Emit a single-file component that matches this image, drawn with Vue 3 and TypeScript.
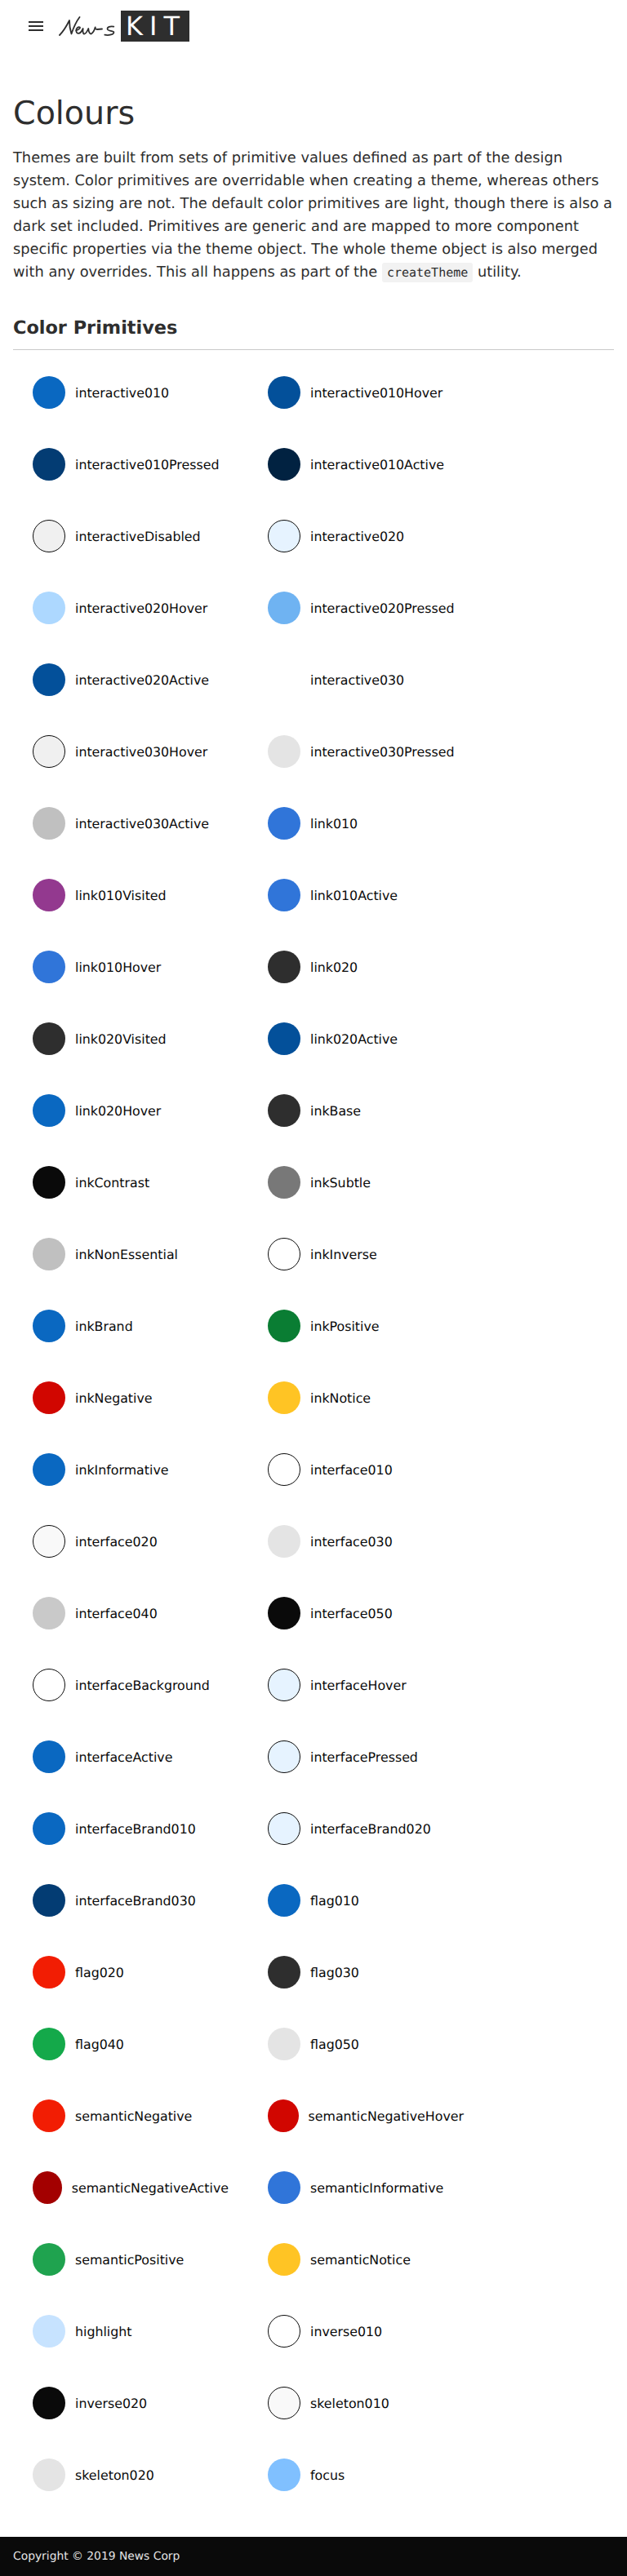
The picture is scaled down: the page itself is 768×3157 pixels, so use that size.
<template>
  <div class="page">
    <header class="top-bar">
      <button class="menu-btn" aria-label="menu">
        <svg width="18" height="12" viewBox="0 0 18 12"><path d="M0 0h18v2H0zM0 5h18v2H0zM0 10h18v2H0z" fill="#2e2e2e" /></svg>
      </button>
      <div class="logo">
        <svg class="logo-news" width="70" height="26" viewBox="0 0 70 26" fill="none" stroke="#2e2e2e" stroke-width="1.8" stroke-linecap="round" stroke-linejoin="round">
          <path d="M1 24 C5 20 10 12 13 6 C13 12 14 18 15.5 22.5 C18 15 21 8 25.5 2" />
          <path d="M21 18.5 C23 18 26.5 16 26 14.5 C24 13.5 21 15.5 21.3 18.5 C21.6 23 26 24 29.7 16 C29 20 30 23 31.5 22.5 C33 22 35 19 36.3 16 C36.5 20 38 23 39.7 22.5 C42 21 44 17 44.7 14.3 C44.5 16 45 17 47 17 L53 16.5" />
          <path d="M67.3 13.7 C63 13 59 14 59.7 17 C60.5 19 66 18.5 67.3 20 C68.5 23 61 25 56.3 23.7" />
        </svg>
        <div class="logo-kit">KIT</div>
      </div>
    </header>

    <main class="content">
      <h1 class="title">Colours</h1>
      <p class="intro">
        Themes are built from sets of primitive values defined as part of the design system. Color primitives are overridable when creating a theme, whereas others such as sizing are not. The default color primitives are light, though there is also a dark set included. Primitives are generic and are mapped to more component specific properties via the theme object. The whole theme object is also merged with any overrides. This all happens as part of the
        <code class="inline-code">createTheme</code> utility.
      </p>
      <h2 class="section-title">Color Primitives</h2>
      <div class="swatches">
        <div v-for="c in colors" :key="c.name" class="swatch">
          <span class="dot" :class="{ outlined: c.outlined }" :style="{ background: c.hex }"></span>
          <span class="name">{{ c.name }}</span>
        </div>
      </div>
    </main>

    <footer class="footer">Copyright © 2019 News Corp</footer>
  </div>
</template>

<script setup lang="ts">
interface Swatch {
  name: string
  hex: string
  outlined?: boolean
}

const colors: Swatch[] = [
  { name: 'interactive010', hex: '#0a68c1' },
  { name: 'interactive010Hover', hex: '#03509a' },
  { name: 'interactive010Pressed', hex: '#033c73' },
  { name: 'interactive010Active', hex: '#012241' },
  { name: 'interactiveDisabled', hex: '#f0f0f0', outlined: true },
  { name: 'interactive020', hex: '#e6f3ff', outlined: true },
  { name: 'interactive020Hover', hex: '#add8ff' },
  { name: 'interactive020Pressed', hex: '#6fb3f2' },
  { name: 'interactive020Active', hex: '#03509a' },
  { name: 'interactive030', hex: '#ffffff' },
  { name: 'interactive030Hover', hex: '#f0f0f0', outlined: true },
  { name: 'interactive030Pressed', hex: '#e4e4e4' },
  { name: 'interactive030Active', hex: '#c0c0c0' },
  { name: 'link010', hex: '#3075d9' },
  { name: 'link010Visited', hex: '#93398f' },
  { name: 'link010Active', hex: '#3075d9' },
  { name: 'link010Hover', hex: '#3075d9' },
  { name: 'link020', hex: '#2e2e2e' },
  { name: 'link020Visited', hex: '#2e2e2e' },
  { name: 'link020Active', hex: '#03509a' },
  { name: 'link020Hover', hex: '#0a68c1' },
  { name: 'inkBase', hex: '#2e2e2e' },
  { name: 'inkContrast', hex: '#0a0a0a' },
  { name: 'inkSubtle', hex: '#787878' },
  { name: 'inkNonEssential', hex: '#c0c0c0' },
  { name: 'inkInverse', hex: '#ffffff', outlined: true },
  { name: 'inkBrand', hex: '#0a68c1' },
  { name: 'inkPositive', hex: '#0a7d33' },
  { name: 'inkNegative', hex: '#d10600' },
  { name: 'inkNotice', hex: '#ffc424' },
  { name: 'inkInformative', hex: '#0a68c1' },
  { name: 'interface010', hex: '#ffffff', outlined: true },
  { name: 'interface020', hex: '#f9f9f9', outlined: true },
  { name: 'interface030', hex: '#e4e4e4' },
  { name: 'interface040', hex: '#c9c9c9' },
  { name: 'interface050', hex: '#0a0a0a' },
  { name: 'interfaceBackground', hex: '#ffffff', outlined: true },
  { name: 'interfaceHover', hex: '#e6f3ff', outlined: true },
  { name: 'interfaceActive', hex: '#0a68c1' },
  { name: 'interfacePressed', hex: '#e6f3ff', outlined: true },
  { name: 'interfaceBrand010', hex: '#0a68c1' },
  { name: 'interfaceBrand020', hex: '#e6f3ff', outlined: true },
  { name: 'interfaceBrand030', hex: '#033c73' },
  { name: 'flag010', hex: '#0a68c1' },
  { name: 'flag020', hex: '#f21d03' },
  { name: 'flag030', hex: '#2e2e2e' },
  { name: 'flag040', hex: '#14a94a' },
  { name: 'flag050', hex: '#e4e4e4' },
  { name: 'semanticNegative', hex: '#f21d03' },
  { name: 'semanticNegativeHover', hex: '#d10600' },
  { name: 'semanticNegativeActive', hex: '#a30000' },
  { name: 'semanticInformative', hex: '#3075d9' },
  { name: 'semanticPositive', hex: '#1fa34f' },
  { name: 'semanticNotice', hex: '#ffc424' },
  { name: 'highlight', hex: '#c7e3ff' },
  { name: 'inverse010', hex: '#ffffff', outlined: true },
  { name: 'inverse020', hex: '#0a0a0a' },
  { name: 'skeleton010', hex: '#f9f9f9', outlined: true },
  { name: 'skeleton020', hex: '#e4e4e4' },
  { name: 'focus', hex: '#80c0ff' }
]
</script>

<style>
html,
body {
  margin: 0;
  background: #fff;
}
</style>

<style scoped>
.page {
  font-family: 'DejaVu Sans', sans-serif;
  color: #2e2e2e;
  width: 768px;
  text-rendering: geometricPrecision;
}

.top-bar {
  display: flex;
  align-items: center;
  height: 64px;
  box-sizing: border-box;
  padding: 0 0 0 35px;
}

.menu-btn {
  border: 0;
  background: none;
  padding: 0;
  display: flex;
  width: 18px;
  height: 12px;
  margin-right: 19px;
}

.logo {
  display: flex;
  align-items: center;
}

.logo-news {
  margin-right: 6px;
}

.logo-kit {
  width: 84px;
  height: 38px;
  background: #2e2e2e;
  color: #fff;
  font-size: 32px;
  line-height: 38px;
  letter-spacing: 8px;
  box-sizing: border-box;
  padding-left: 6px;
  overflow: hidden;
}

.content {
  padding: 0 16px;
}

.title {
  margin: 47px 0 0;
  font-size: 39.6px;
  line-height: 56px;
  font-weight: 400;
}

.intro {
  margin: 13px 0 0;
  font-size: 17.8px;
  line-height: 28px;
}

.inline-code {
  font-family: 'DejaVu Sans Mono', monospace;
  font-size: 15px;
  background: #f2f2f2;
  border-radius: 3px;
  padding: 3px 6px;
}

.section-title {
  margin: 40px 0 0;
  padding-bottom: 12px;
  border-bottom: 1px solid #c9c9c9;
  font-size: 22.4px;
  line-height: 28px;
  font-weight: 700;
}

.swatches {
  display: grid;
  grid-template-columns: 240px 240px;
  column-gap: 48px;
  row-gap: 48px;
  padding: 32px 0 0 24px;
}

.swatch {
  display: flex;
  align-items: center;
  height: 40px;
  min-width: 0;
}

.dot {
  flex: 0 1 40px;
  min-width: 0;
  height: 40px;
  border-radius: 50%;
  box-sizing: border-box;
}

.dot.outlined {
  border: 1px solid #0a0a0a;
}

.name {
  margin-left: 12px;
  font-size: 15.82px;
  color: #0a0a0a;
  white-space: nowrap;
}

.footer {
  margin-top: 56px;
  height: 48px;
  background: #0a0a0a;
  color: #e4e4e4;
  font-size: 13.85px;
  line-height: 48px;
  padding-left: 16px;
}
</style>
